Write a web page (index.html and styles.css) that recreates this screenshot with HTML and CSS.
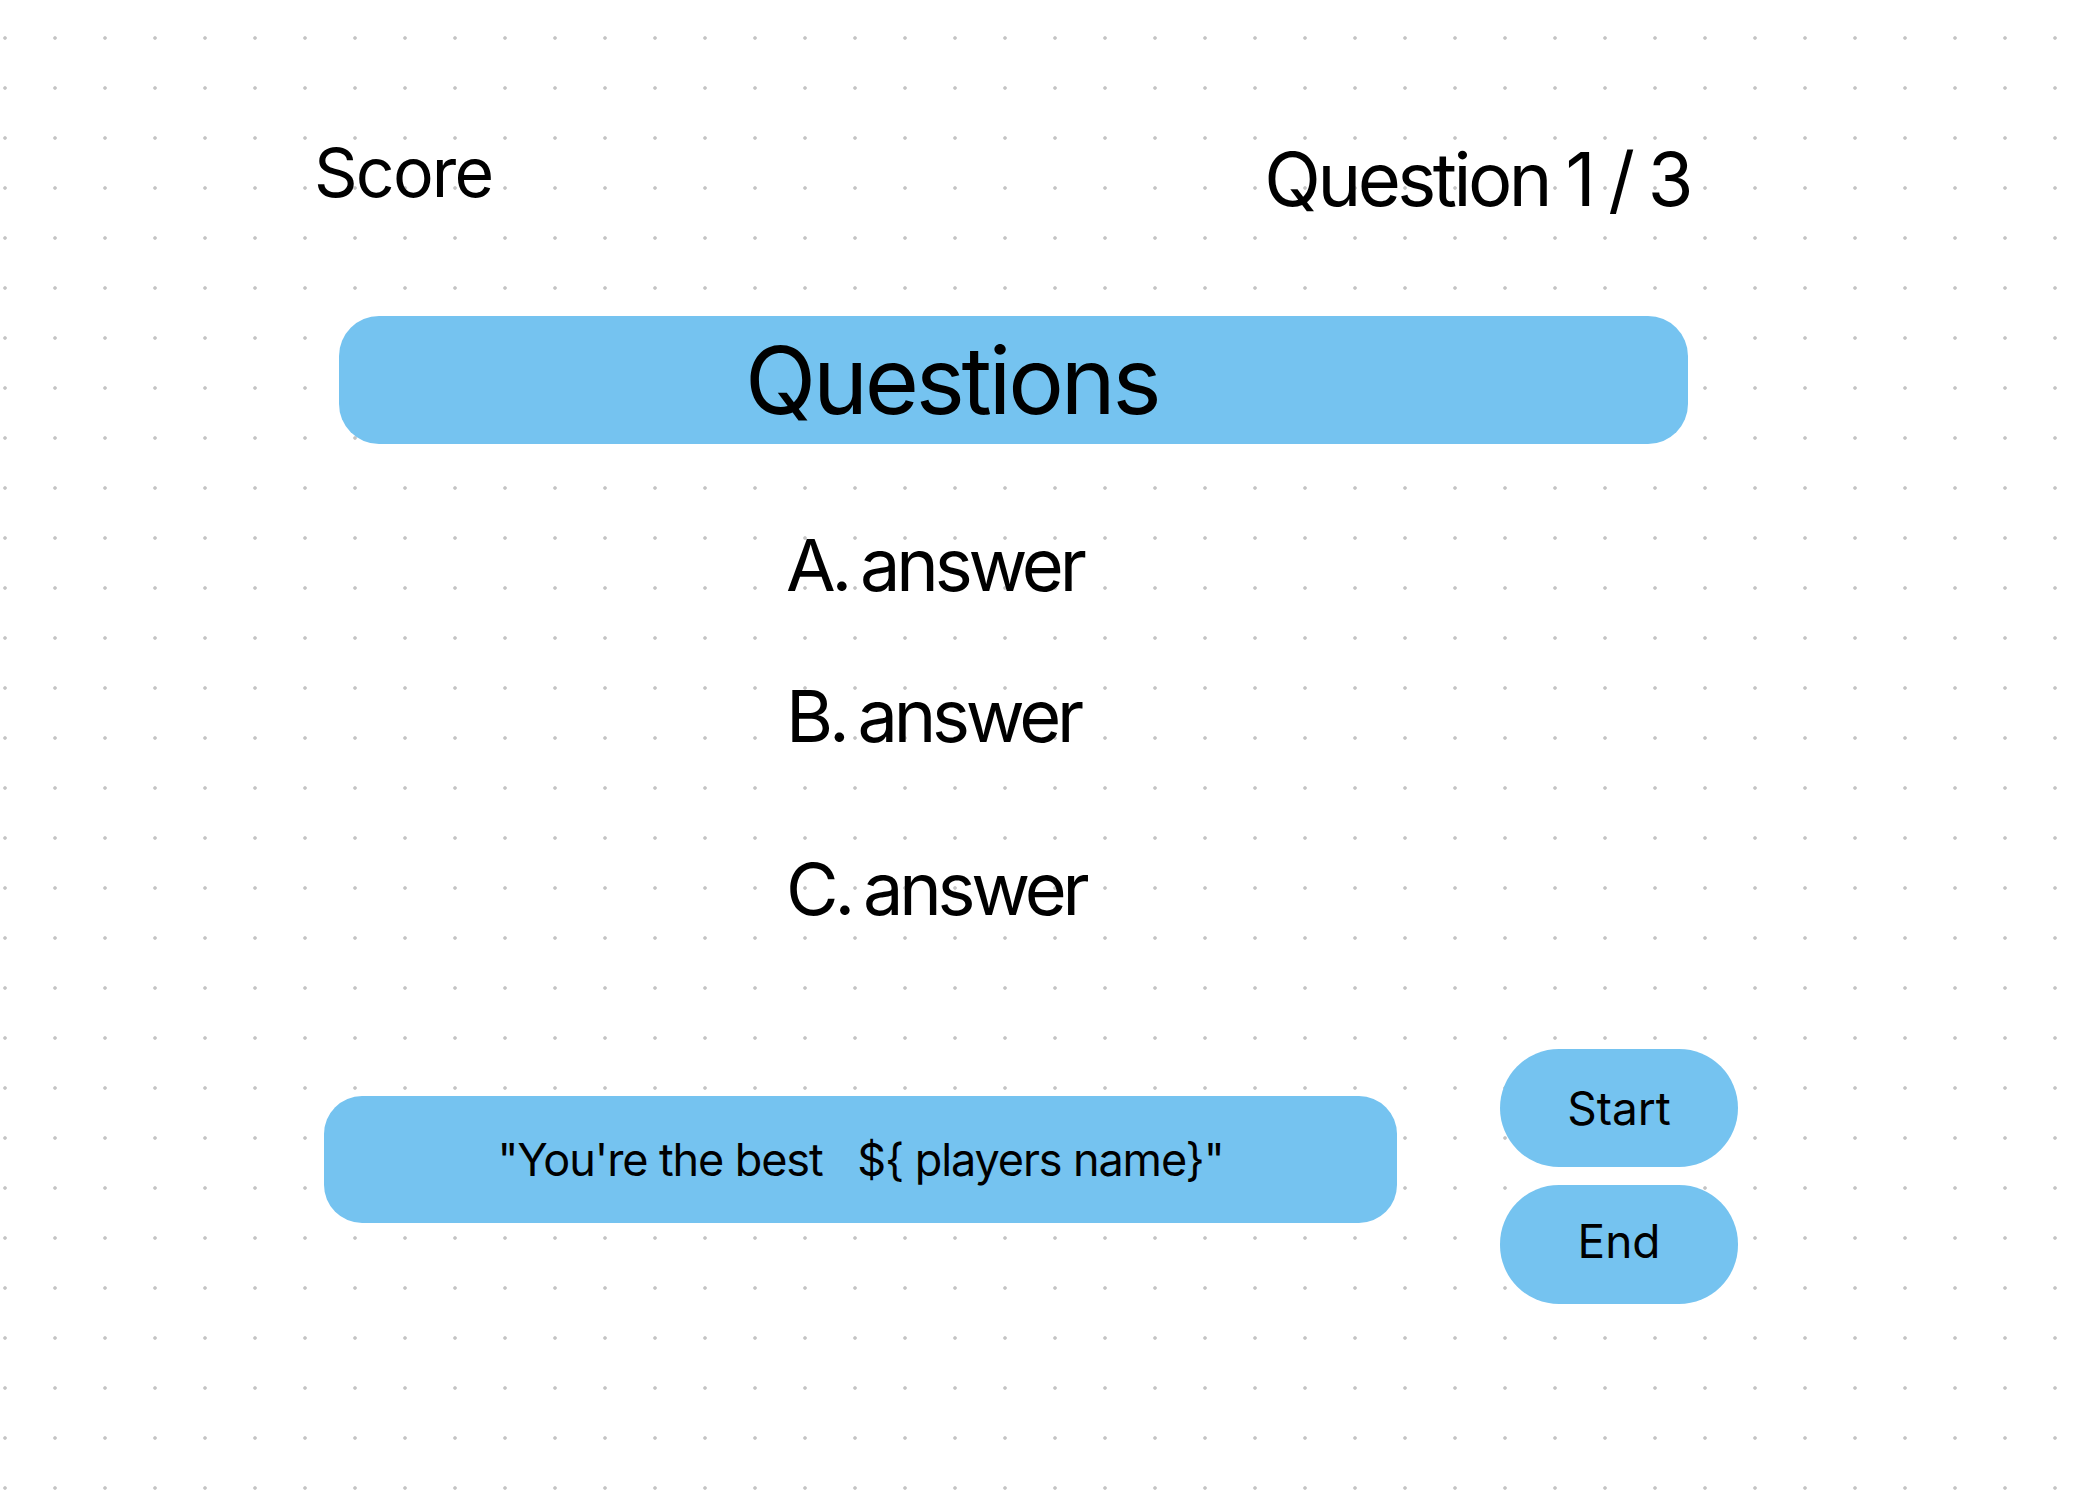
FILE: index.html
```html
<!DOCTYPE html>
<html lang="en">
<head>
<meta charset="utf-8">
<title>Quiz</title>
<link rel="stylesheet" href="styles.css">
</head>
<body>
<main class="page">
  <header class="top-bar">
    <div class="score">Score</div>
    <div class="counter">Question 1 / 3</div>
  </header>

  <section class="question-box">
    <h1 class="question-title">Questions</h1>
  </section>

  <ul class="answers">
    <li class="answer answer-a">A. answer</li>
    <li class="answer answer-b">B. answer</li>
    <li class="answer answer-c">C. answer</li>
  </ul>

  <section class="bottom-row">
    <div class="message-box"><span class="message">"You're the best   ${ players name}"</span></div>
    <div class="controls">
      <button class="pill">Start</button>
      <button class="pill pill-end">End</button>
    </div>
  </section>
</main>
</body>
</html>
```

FILE: styles.css
```css
* {
  box-sizing: border-box;
}

html, body {
  margin: 0;
  padding: 0;
}

body {
  width: 2086px;
  height: 1504px;
  overflow: hidden;
  background-color: #ffffff;
  background-image: radial-gradient(circle at 25px 25px, #c4c4c4 0, #c4c4c4 1.4px, rgba(196,196,196,0) 2.2px);
  background-size: 50px 50px;
  background-position: -20px 13px;
  font-family: Inter, "Noto Sans", "Liberation Sans", sans-serif;
  color: #000;
}

.page {
  display: flex;
  flex-direction: column;
  align-items: flex-start;
}

.top-bar {
  display: flex;
  justify-content: space-between;
  align-items: flex-start;
  margin-left: 314px;
  margin-top: 138px;
  width: 1376px;
}

.score {
  font-size: 68px;
  line-height: 1;
  letter-spacing: -1.8px;
}

.counter {
  font-size: 74px;
  line-height: 1;
  margin-top: 4px;
  letter-spacing: -3.5px;
  word-spacing: -1px;
}

.question-box {
  margin-top: 100px;
  margin-left: 339px;
  width: 1349px;
  height: 128px;
  border-radius: 40px;
  background: #75c3f0;
  display: flex;
  align-items: center;
  padding-left: 406px;
}

.question-title {
  margin: 0;
  font-size: 93px;
  font-weight: 400;
  line-height: 1;
  letter-spacing: -3.2px;
}

.answers {
  list-style: none;
  margin: 85px 0 0 786px;
  padding: 0;
  display: flex;
  flex-direction: column;
}

.answer {
  font-size: 72px;
  line-height: 1;
  height: 72px;
  letter-spacing: -4.2px;
  word-spacing: -4px;
}

.answer-b {
  margin-top: 79px;
}

.answer-c {
  margin-top: 101px;
}

.bottom-row {
  display: flex;
  align-items: flex-start;
  margin-top: 124px;
  margin-left: 324px;
}

.message-box {
  margin-top: 47px;
  width: 1073px;
  height: 127px;
  border-radius: 38px;
  background: #75c3f0;
  display: flex;
  align-items: center;
  justify-content: center;
}

.message {
  white-space: pre;
  font-size: 45px;
  line-height: 1;
  letter-spacing: -1.1px;
}

.controls {
  margin-left: 103px;
  display: flex;
  flex-direction: column;
  gap: 18px;
}

.pill {
  width: 238px;
  height: 118px;
  border: none;
  border-radius: 59px;
  background: #75c3f0;
  font-family: Inter, "Noto Sans", "Liberation Sans", sans-serif;
  font-size: 46px;
  line-height: 1;
  color: #000;
  padding: 0;
  display: flex;
  align-items: center;
  justify-content: center;
}

.pill-end {
  height: 119px;
  padding-bottom: 8px;
}
```
